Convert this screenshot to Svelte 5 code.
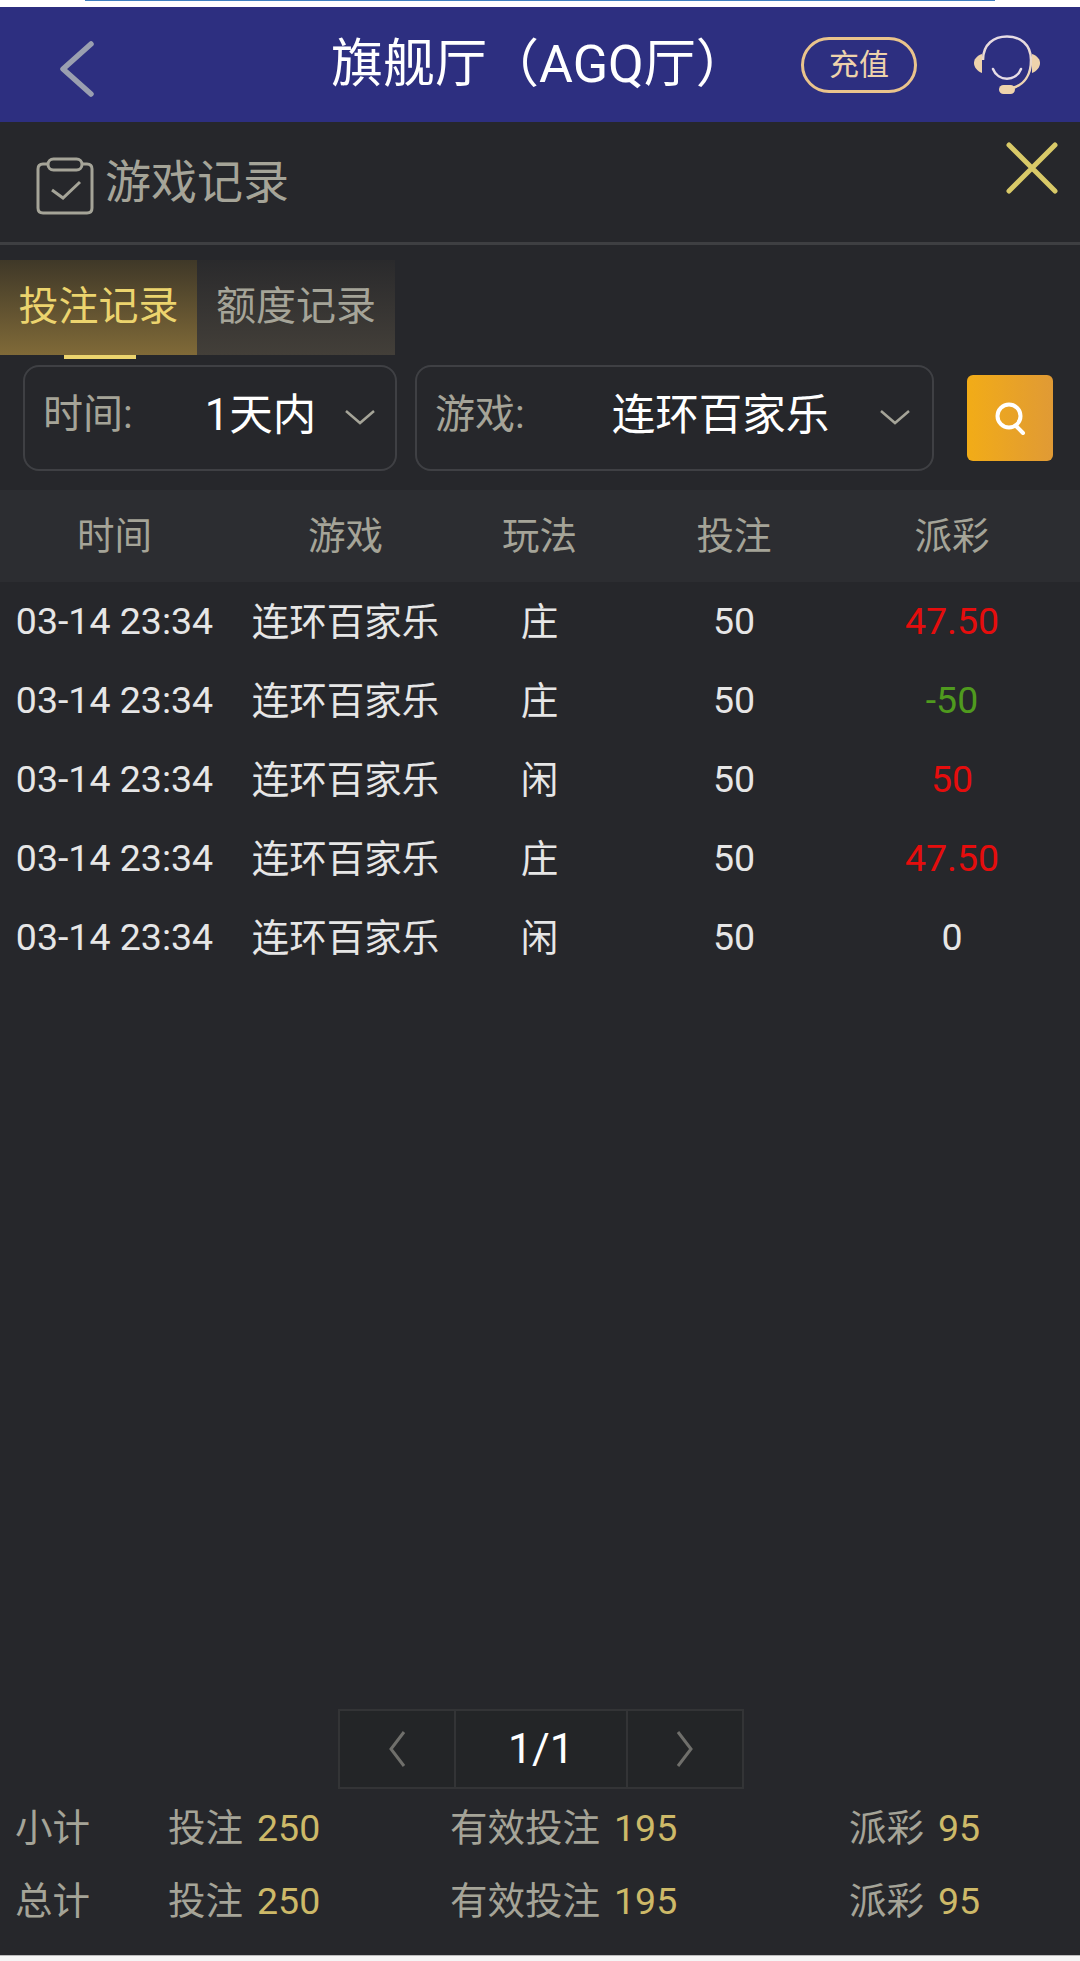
<script>
	const columns = ['时间', '游戏', '玩法', '投注', '派彩'];
	const rows = [
		{ time: '03-14 23:34', game: '连环百家乐', play: '庄', bet: '50', pay: '47.50', tone: 'win' },
		{ time: '03-14 23:34', game: '连环百家乐', play: '庄', bet: '50', pay: '-50', tone: 'lose' },
		{ time: '03-14 23:34', game: '连环百家乐', play: '闲', bet: '50', pay: '50', tone: 'win' },
		{ time: '03-14 23:34', game: '连环百家乐', play: '庄', bet: '50', pay: '47.50', tone: 'win' },
		{ time: '03-14 23:34', game: '连环百家乐', play: '闲', bet: '50', pay: '0', tone: '' }
	];
	const totals = [
		{ label: '小计', bet: 250, valid: 195, pay: 95 },
		{ label: '总计', bet: 250, valid: 195, pay: 95 }
	];
</script>

<div class="page">
	<div class="statusbar"><div class="progress"></div></div>

	<header class="topbar">
		<svg class="back" width="38" height="58" viewBox="0 0 38 58">
			<path d="M34 4 L6 29 L34 54" fill="none" stroke="#9a9fb0" stroke-width="5.5" stroke-linecap="round" stroke-linejoin="round" />
		</svg>
		<h1>旗舰厅（AGQ厅）</h1>
		<div class="recharge">充值</div>
		<svg class="agent" width="66" height="59" viewBox="0 0 66 59">
			<defs>
				<linearGradient id="gold" x1="0" y1="0" x2="0" y2="1">
					<stop offset="0" stop-color="#e6dce6" />
					<stop offset="1" stop-color="#eed3ac" />
				</linearGradient>
			</defs>
			<path d="M9 25 C9 9 20 1.5 33 1.5 C46 1.5 57 9 57 25 C57 40 50 50 38 53" fill="none" stroke="url(#gold)" stroke-width="2.5" />
			<path d="M8 19 C2 21 0 25 0 28 C0 32 3 36 8 38 Z" fill="#eed3ac" />
			<path d="M58 19 C64 21 66 25 66 28 C66 32 63 36 58 38 Z" fill="#eed3ac" />
			<path d="M19 34 C24 47 42 47 47 34" fill="none" stroke="#e6dce6" stroke-width="2.5" stroke-linecap="round" />
			<rect x="25" y="50" width="16" height="9" rx="4.5" fill="#eed3ac" />
		</svg>
	</header>

	<main class="panel">
		<div class="title-row">
			<svg class="clip" width="58" height="58" viewBox="0 0 58 58">
				<path d="M12 7 H7 Q2 7 2 12 V51 Q2 56 7 56 H51 Q56 56 56 51 V12 Q56 7 51 7 H46" fill="none" stroke="#a5a498" stroke-width="3" />
				<rect x="12" y="2" width="34" height="11" rx="5.5" fill="none" stroke="#a5a498" stroke-width="3" />
				<path d="M16 33 L27 41 L44 25" fill="none" stroke="#a5a498" stroke-width="3" />
			</svg>
			<span class="title">游戏记录</span>
			<svg class="close" width="52" height="52" viewBox="0 0 52 52">
				<path d="M3 3 L49 49 M49 3 L3 49" stroke="#d8c968" stroke-width="5" stroke-linecap="round" />
			</svg>
		</div>

		<div class="tabs">
			<div class="tab active">投注记录</div>
			<div class="tab">额度记录</div>
		</div>

		<div class="filters">
			<div class="select time">
				<span class="label">时间:</span>
				<span class="value">1天内</span>
				<svg width="32" height="16" viewBox="0 0 32 16"><path d="M2 2 L16 14 L30 2" fill="none" stroke="#a5a498" stroke-width="2.5" /></svg>
			</div>
			<div class="select game">
				<span class="label">游戏:</span>
				<span class="value">连环百家乐</span>
				<svg width="32" height="16" viewBox="0 0 32 16"><path d="M2 2 L16 14 L30 2" fill="none" stroke="#a5a498" stroke-width="2.5" /></svg>
			</div>
			<div class="search">
				<svg width="32" height="34" viewBox="0 0 32 34">
					<circle cx="15" cy="15" r="11.5" fill="none" stroke="#fff" stroke-width="4" />
					<path d="M22 25 L29 32" stroke="#fff" stroke-width="4" stroke-linecap="round" />
				</svg>
			</div>
		</div>

		<div class="row head">
			{#each columns as col}
				<div class="cjk">{col}</div>
			{/each}
		</div>

		<div class="body">
			{#each rows as r}
				<div class="row">
					<div>{r.time}</div>
					<div class="cjk">{r.game}</div>
					<div class="cjk">{r.play}</div>
					<div>{r.bet}</div>
					<div class={r.tone}>{r.pay}</div>
				</div>
			{/each}
		</div>

		<div class="pager">
			<div class="page-btn">
				<svg width="18" height="36" viewBox="0 0 18 36"><path d="M16 1 L3 18 L16 35" fill="none" stroke="#6f6f6b" stroke-width="3" /></svg>
			</div>
			<div class="page-num">1/1</div>
			<div class="page-btn">
				<svg width="18" height="36" viewBox="0 0 18 36"><path d="M2 1 L15 18 L2 35" fill="none" stroke="#6f6f6b" stroke-width="3" /></svg>
			</div>
		</div>

		<div class="totals">
			{#each totals as t}
				<div class="total-row">
					<span class="t-label">{t.label}</span>
					<span class="t-bet">投注<b>{t.bet}</b></span>
					<span class="t-valid">有效投注<b>{t.valid}</b></span>
					<span class="t-pay">派彩<b>{t.pay}</b></span>
				</div>
			{/each}
		</div>
	</main>
	<div class="footer-gap"></div>
</div>

<style>
	:global(body) {
		margin: 0;
		background: #f5f5f5;
	}
	.page {
		width: 1080px;
		height: 1961px;
		display: flex;
		flex-direction: column;
		font-family: Roboto, "Noto Sans CJK SC", sans-serif;
		overflow: hidden;
	}
	.statusbar {
		height: 7px;
		background: #fff;
		padding: 0 85px;
	}
	.progress {
		height: 1px;
		width: 910px;
		background: #3f7fbf;
	}
	.topbar {
		height: 115px;
		background: #2d2f80;
		display: flex;
		align-items: center;
		position: relative;
		color: #fff;
	}
	.back {
		margin: 9px 0 0 57px;
	}
	.topbar h1 {
		position: absolute;
		left: 331px;
		margin: 0;
		font-size: 52px;
		font-weight: 400;
		line-height: 1;
		letter-spacing: 0;
		white-space: nowrap;
	}
	.recharge {
		position: absolute;
		left: 801px;
		top: 30px;
		width: 116px;
		height: 56px;
		box-sizing: border-box;
		border: 3px solid #eac48c;
		border-radius: 28px;
		color: #eed3ac;
		font-size: 30px;
		line-height: 50px;
		text-align: center;
	}
	.agent {
		position: absolute;
		left: 974px;
		top: 28px;
	}
	.panel {
		flex: 1;
		background: #26272b;
		display: flex;
		flex-direction: column;
	}
	.title-row {
		height: 120px;
		border-bottom: 3px solid #3e3f42;
		display: flex;
		align-items: center;
		position: relative;
	}
	.clip {
		margin: 8px 0 0 36px;
	}
	.title {
		margin-left: 11px;
		font-size: 46px;
		color: #a5a498;
		line-height: 1;
	}
	.close {
		position: absolute;
		right: 22px;
		top: 20px;
	}
	.tabs {
		display: flex;
		margin-top: 15px;
		height: 95px;
	}
	.tab {
		width: 198px;
		font-size: 40px;
		line-height: 94px;
		text-align: center;
		color: #a5a498;
		background: linear-gradient(180deg, #2a2a2c, #433f39);
	}
	.tab.active {
		position: relative;
		width: 197px;
		color: #ecd46e;
		background: linear-gradient(180deg, #3f3828, #806a38);
	}
	.tab.active::after {
		content: '';
		position: absolute;
		left: 64px;
		bottom: -4px;
		width: 72px;
		height: 4px;
		background: #ecd46e;
	}
	.filters {
		display: flex;
		align-items: center;
		margin-top: 10px;
		padding-left: 23px;
	}
	.select {
		height: 106px;
		box-sizing: border-box;
		border: 2px solid #3f4044;
		border-radius: 16px;
		display: flex;
		align-items: center;
		padding-bottom: 14px;
		position: relative;
	}
	.select svg {
		position: absolute;
		right: 19px;
		top: 42px;
	}
	.select.game svg {
		right: 21px;
	}
	.select.time {
		width: 374px;
		margin-right: 18px;
	}
	.select.game {
		width: 519px;
		margin-right: 33px;
	}
	.label {
		margin-left: 18px;
		font-size: 40px;
		color: #a5a498;
	}
	.value {
		font-size: 43.5px;
		color: #fff;
		white-space: nowrap;
	}
	.time .value {
		margin-left: 72px;
	}
	.game .value {
		margin-left: 87px;
	}
	.search {
		width: 86px;
		height: 86px;
		border-radius: 6px;
		background: linear-gradient(90deg, #f2ac17, #e09a35);
		display: flex;
		align-items: center;
		justify-content: center;
	}
	.row {
		display: grid;
		grid-template-columns: 229px 233px 155px 234px 202px;
		height: 79px;
		align-items: center;
		text-align: center;
		font-size: 37.5px;
		color: #e6e6e6;
		white-space: nowrap;
	}
	.row > div {
		padding-bottom: 2px;
	}
	.row > .cjk {
		padding-bottom: 7px;
	}
	.row.head {
		margin-top: 19px;
		height: 92px;
		background: #2c2d31;
		color: #a5a498;
	}
	.body {
		flex: 1;
	}
	.win {
		color: #e50d0d;
	}
	.lose {
		color: #4f9a1e;
	}
	.pager {
		display: flex;
		align-self: center;
		height: 80px;
		margin-left: 2px;
		box-sizing: border-box;
		border: 2px solid #333436;
		background: #232527;
		margin-bottom: 3px;
	}
	.page-btn {
		width: 114px;
		display: flex;
		align-items: center;
		justify-content: center;
	}
	.page-num {
		width: 170px;
		border-left: 2px solid #333436;
		border-right: 2px solid #333436;
		text-align: center;
		font-size: 43px;
		line-height: 74px;
		color: #fff;
	}
	.totals {
		height: 163px;
		font-size: 37.5px;
		color: #a5a498;
	}
	.total-row {
		position: relative;
		height: 73px;
		line-height: 73px;
		white-space: nowrap;
	}
	.total-row span {
		position: absolute;
		top: 0;
	}
	.total-row b {
		font-weight: 400;
		color: #cdb968;
		margin-left: 14px;
	}
	.t-label {
		left: 15px;
	}
	.t-bet {
		left: 168px;
	}
	.t-valid {
		left: 450px;
	}
	.t-pay {
		left: 849px;
	}
	.footer-gap {
		height: 6px;
		background: #f5f5f5;
		border-top: 1px solid #bbb;
		box-sizing: border-box;
	}
</style>
